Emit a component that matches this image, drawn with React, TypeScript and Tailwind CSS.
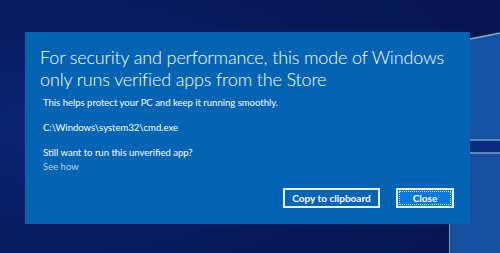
export default function App() {
  return (
    <div
      className="relative w-[500px] h-[253px] overflow-hidden bg-[#07195a]"
      style={{ fontFamily: "Lato, 'Open Sans', sans-serif" }}
    >
      {/* wallpaper: windows logo panes on the right */}
      <svg className="absolute inset-0" width="500" height="253" viewBox="0 0 500 253">
        <defs>
          <radialGradient id="glow" cx="0.1" cy="0.5" r="0.9">
            <stop offset="0" stopColor="#0a2470" />
            <stop offset="1" stopColor="#061552" />
          </radialGradient>
        </defs>
        <rect width="500" height="253" fill="url(#glow)" />
        <polygon points="455,42 500,33 500,140 455,140" fill="#1653a6" />
        <line x1="455" y1="42" x2="500" y2="33" stroke="#7fb2c8" strokeWidth="1.5" />
        <line x1="455" y1="140" x2="500" y2="140" stroke="#79a9bc" strokeWidth="1.5" />
        <rect x="455" y="141" width="45" height="11" fill="#0a2c80" />
        <polygon points="449,153 500,153 500,253 449,253" fill="#14509f" />
        <line x1="449" y1="153" x2="500" y2="153" stroke="#79a9bc" strokeWidth="1.5" />
        <line x1="449.5" y1="153" x2="449.5" y2="253" stroke="#6e9fb0" strokeWidth="1" />
      </svg>

      <div className="relative pl-[25px] pt-[32px]">
        <div className="w-[445px] h-[192px] bg-[#0563b4] flex flex-col px-[15px] pt-[14px] pb-[16px] text-white">
          <div className="text-[18px] leading-[22px] font-light tracking-[-0.15px]">
            For security and performance, this mode of Windows only runs verified apps from the Store
          </div>
          <div className="ml-[3px] mt-[6px] text-[9.5px] leading-[13px]">
            This helps protect your PC and keep it running smoothly.
          </div>
          <div className="ml-[3px] mt-[12px] text-[9.5px] leading-[13px]">C:\Windows\system32\cmd.exe</div>
          <div className="ml-[3px] mt-[12px] text-[9.5px] leading-[13px]">Still want to run this unverified app?</div>
          <div className="ml-[3px] mt-[1px] text-[9.5px] leading-[13px] text-[#b8d4ee]">See how</div>

          <div className="mt-auto flex justify-end gap-[16px] pr-[1px]">
            <button className="w-[97px] h-[20px] border-2 border-[#e8eef5] text-[10px] font-bold text-white leading-none">
              Copy to clipboard
            </button>
            <button className="w-[58px] h-[20px] border-2 border-[#e8eef5] bg-[#0a78dc] p-[1px] text-[10px] font-bold text-white leading-none">
              <span className="flex h-full w-full items-center justify-center border border-dotted border-[#cfe2f5]">
                Close
              </span>
            </button>
          </div>
        </div>
      </div>
    </div>
  );
}
